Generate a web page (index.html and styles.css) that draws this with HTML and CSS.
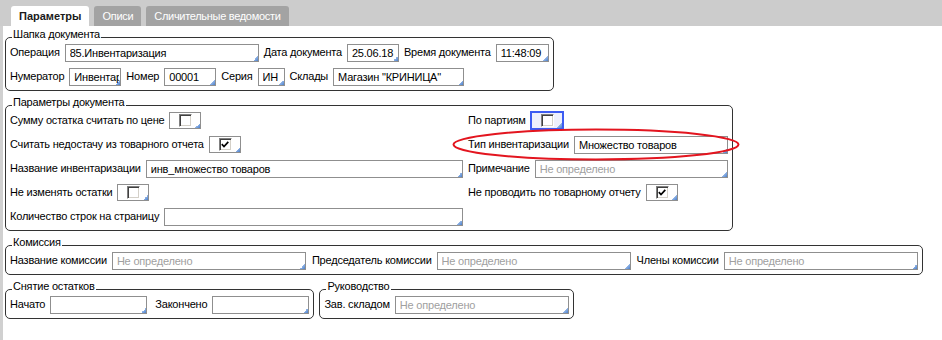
FILE: index.html
```html
<!DOCTYPE html>
<html lang="ru">
<head>
  <meta charset="UTF-8">
  <title>Инвентаризация</title>
  <link rel="stylesheet" href="styles.css">
</head>
<body>

<div class="tabs">
  <div class="tab active">Параметры</div>
  <div class="tab">Описи</div>
  <div class="tab">Сличительные ведомости</div>
</div>

<div class="page">

  <fieldset class="group">
    <legend>Шапка документа</legend>
    <div class="fields">
      <div class="row">
        <label>Операция</label>
        <input class="field w194" type="text" value="85.Инвентаризация">
        <label>Дата документа</label>
        <input class="field w52" type="text" value="25.06.18">
        <label>Время документа</label>
        <input class="field w53" type="text" value="11:48:09">
      </div>
      <div class="row">
        <label>Нумератор</label>
        <input class="field w52" type="text" value="Инвентаризация">
        <label>Номер</label>
        <input class="field w52" type="text" value="00001">
        <label>Серия</label>
        <input class="field w27" type="text" value="ИН">
        <label>Склады</label>
        <input class="field w131" type="text" value="Магазин &quot;КРИНИЦА&quot;">
      </div>
    </div>
  </fieldset>

  <fieldset class="group">
    <legend>Параметры документа</legend>
    <div class="fields params">
      <div class="cell">
        <label>Сумму остатка считать по цене</label>
        <span class="box"><span class="check"></span></span>
      </div>
      <div class="cell">
        <label>По партиям</label>
        <span class="box focus"><span class="check"></span></span>
      </div>

      <div class="cell">
        <label>Считать недостачу из товарного отчета</label>
        <span class="box"><span class="check"><svg width="8" height="7" viewBox="0 0 8 7"><path d="M0.8 3.2l2.2 2.3 4.3-4.6" fill="none" stroke="#000" stroke-width="1.7"/></svg></span></span>
      </div>
      <div class="cell marked">
        <label>Тип инвентаризации</label>
        <input class="field grow" type="text" value="Множество товаров">
        <svg class="mark" width="288" height="33" viewBox="0 0 288 33">
          <ellipse cx="144" cy="16.5" rx="142.5" ry="15" fill="none" stroke="#e3151f" stroke-width="2"/>
        </svg>
      </div>

      <div class="cell">
        <label>Название инвентаризации</label>
        <input class="field grow" type="text" value="инв_множество товаров">
      </div>
      <div class="cell">
        <label>Примечание</label>
        <input class="field grow" type="text" placeholder="Не определено">
      </div>

      <div class="cell">
        <label>Не изменять остатки</label>
        <span class="box"><span class="check"></span></span>
      </div>
      <div class="cell">
        <label>Не проводить по товарному отчету</label>
        <span class="box"><span class="check"><svg width="8" height="7" viewBox="0 0 8 7"><path d="M0.8 3.2l2.2 2.3 4.3-4.6" fill="none" stroke="#000" stroke-width="1.7"/></svg></span></span>
      </div>

      <div class="cell">
        <label>Количество строк на страницу</label>
        <input class="field grow" type="text" value="">
      </div>
      <div class="cell"></div>
    </div>
  </fieldset>

  <fieldset class="group">
    <legend>Комиссия</legend>
    <div class="fields">
      <div class="row">
        <label>Название комиссии</label>
        <input class="field w194" type="text" placeholder="Не определено">
        <label class="next">Председатель комиссии</label>
        <input class="field w194" type="text" placeholder="Не определено">
        <label class="next">Члены комиссии</label>
        <input class="field w194" type="text" placeholder="Не определено">
      </div>
    </div>
  </fieldset>

  <div class="bottom">
    <fieldset class="group">
      <legend>Снятие остатков</legend>
      <div class="fields">
        <div class="row">
          <label>Начато</label>
          <input class="field w97" type="text" value="">
          <label class="next wide">Закончено</label>
          <input class="field w97" type="text" value="">
        </div>
      </div>
    </fieldset>

    <fieldset class="group">
      <legend>Руководство</legend>
      <div class="fields">
        <div class="row">
          <label>Зав. складом</label>
          <input class="field w174" type="text" placeholder="Не определено">
        </div>
      </div>
    </fieldset>
  </div>

</div>

</body>
</html>
```

FILE: styles.css
```css
body {
  margin: 0;
  font-family: "Liberation Sans", Arial, sans-serif;
  font-size: 11px;
  letter-spacing: -0.2px;
  color: #000;
  background: #fff;
}

.tabs {
  display: flex;
  gap: 5px;
  height: 26px;
  box-sizing: border-box;
  padding: 6px 0 0 11px;
  background: #cccccc;
  letter-spacing: -0.3px;
}

.tab {
  height: 20px;
  box-sizing: border-box;
  padding: 1px 8px 0;
  line-height: 19px;
  border-radius: 3px 3px 0 0;
  background: #a3a3a3;
  color: #fff;
}

.tab.active {
  background: #fff;
  color: #1a1a1a;
  font-weight: bold;
  letter-spacing: 0;
}

.page {
  min-height: calc(100vh - 26px);
  box-sizing: border-box;
  border-left: 3px solid #d0d0d0;
  padding: 2px 0 0 2px;
}

.group {
  width: fit-content;
  box-sizing: border-box;
  min-width: 0;
  margin: 5px 0 0;
  padding: 0 4px 4px;
  border: 1px solid #333;
  border-radius: 5px;
}

.page > .group:first-child {
  margin-top: 0;
}

.group legend {
  margin-left: 2px;
  padding: 0 1px 7px;
  line-height: 12px;
}

.fields {
  margin-top: -3px;
  display: flex;
  flex-direction: column;
  gap: 6px;
}

.row,
.cell {
  display: flex;
  gap: 5px;
  align-items: flex-start;
}

.row label,
.cell label {
  white-space: nowrap;
  line-height: 16px;
}

.row .next {
  margin-left: 1px;
}

.row .wide {
  margin-left: 3px;
}

.params {
  display: grid;
  grid-template-columns: 453px 260px;
  column-gap: 5px;
  row-gap: 6px;
}

.cell {
  height: 18px;
}

.field {
  height: 18px;
  box-sizing: border-box;
  padding: 0 1px 0 4px;
  border: 1px solid #8f8f8f;
  font: inherit;
  letter-spacing: inherit;
  color: #000;
  background: linear-gradient(to bottom right, transparent 50%, #8db1e4 50%, #4a7fcc) no-repeat right bottom / 5px 5px #fff;
  outline: none;
}

.field::placeholder {
  color: #a0a0a0;
}

.grow {
  flex: 1;
  min-width: 0;
}

.w27 { width: 27px; }
.w52 { width: 52px; }
.w53 { width: 53px; }
.w97 { width: 97px; }
.w131 { width: 131px; }
.w174 { width: 174px; }
.w194 { width: 194px; }

.box {
  display: flex;
  align-items: center;
  width: 32px;
  height: 17px;
  box-sizing: border-box;
  padding-left: 9px;
  border: 1px solid #8f8f8f;
  background: linear-gradient(to bottom right, transparent 50%, #8db1e4 50%, #4a7fcc) no-repeat right bottom / 5px 5px #fff;
}

.box.focus {
  border-color: #3d5cf2;
  outline: 1px solid #3d5cf2;
  background-color: #eef0fc;
}

.check {
  display: flex;
  align-items: center;
  justify-content: center;
  width: 13px;
  height: 13px;
  box-sizing: border-box;
  border: 1px solid;
  border-color: #808080 #fff #fff #808080;
  box-shadow: inset 1px 1px #404040, inset -1px -1px #d4d0c8;
  background: #fff;
}

.marked {
  position: relative;
}

.mark {
  position: absolute;
  left: -16px;
  top: -8px;
  pointer-events: none;
}

.bottom {
  display: flex;
  gap: 5px;
  align-items: flex-start;
}
```
